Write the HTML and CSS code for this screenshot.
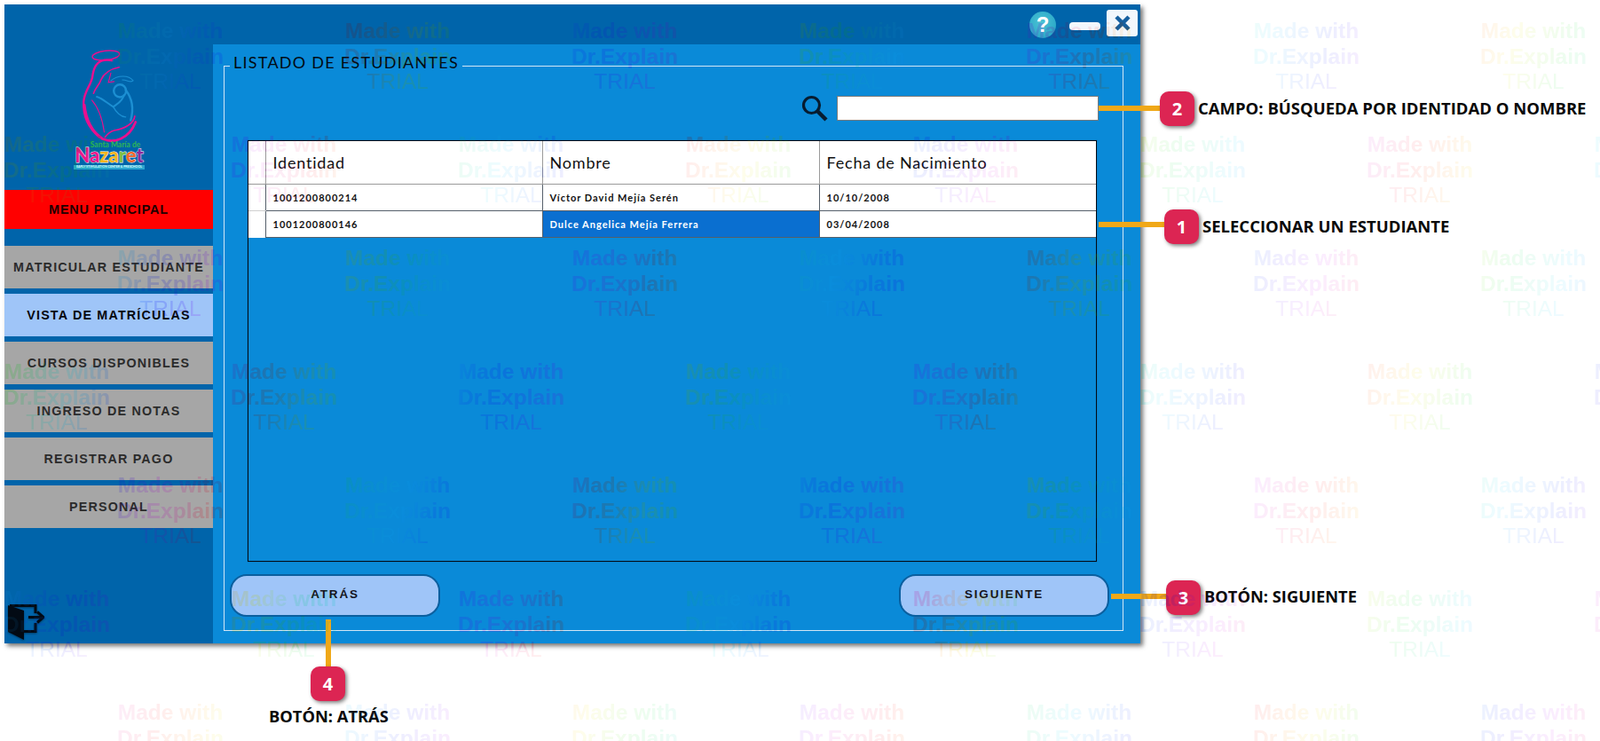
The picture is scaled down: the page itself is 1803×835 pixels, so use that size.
FILE: index.html
```html
<!DOCTYPE html>
<html lang="es">
<head>
<meta charset="utf-8">
<title>Listado de estudiantes</title>
<link rel="stylesheet" href="styles.css">
</head>
<body>
<div class="page">
<div class="window">
  <aside class="sidebar">
    <div class="logo">
      <svg class="logo-art" viewBox="0 0 100 150" width="100" height="150">
        <g transform="translate(9 2) scale(.93 .95)">
        <g fill="none" stroke="#e8108f" stroke-linecap="round">
          <ellipse cx="38" cy="11" rx="16.5" ry="5.5" stroke-width="1.6" transform="rotate(-6 38 11)"/>
          <path d="M45 17C30 14 24 22 22 34C21 46 12 52 11 66C10 84 18 98 30 108" stroke-width="2.6"/>
          <path d="M54 25C44 27 36 31 32 40C30 46 25 50 23 56" stroke-width="1.8"/>
          <path d="M12 70C14 88 22 102 34 110C48 116 66 110 74 90" stroke-width="3"/>
          <path d="M73 83C72 92 60 98 48 100C44 101 40 104 37 108" stroke-width="1.8"/>
          <path d="M21 64C30 74 34 88 36 102" stroke-width="1.2"/>
          <path d="M44 32L41 43L48 42" stroke-width="1.2"/>
        </g>
        <g fill="none" stroke="#1c8fd2" stroke-linecap="round">
          <path d="M44 41C52 34 66 34 71 41C68 44 64 40 58 40" stroke-width="1.2"/>
          <circle cx="55" cy="53" r="7.5" stroke-width="2.6"/>
          <path d="M27 60C34 62 40 68 47 72C52 68 58 66 60 58" stroke-width="2.2"/>
          <path d="M62 52C70 62 72 74 68 88" stroke-width="2.6"/>
          <path d="M47 72C50 78 56 84 62 84" stroke-width="1.4"/>
        </g>
        </g>
        <text class="logo-santa" x="55" y="116" text-anchor="middle">Santa María de</text>
        <text class="logo-naz" x="48" y="133" text-anchor="middle"><tspan fill="#ea1a8c">Na</tspan><tspan fill="#f3b61f">za</tspan><tspan fill="#7cc143">r</tspan><tspan fill="#f2682a">e</tspan><tspan fill="#8e2a9c">t</tspan></text>
      </svg>
      <div class="logo-band">EARLY STIMULATION CENTER &amp; PRESCHOOL</div>
    </div>
    <div class="menu-title">MENU PRINCIPAL</div>
    <nav class="menu">
      <a class="menu-item">MATRICULAR ESTUDIANTE</a>
      <a class="menu-item is-active">VISTA DE MATRÍCULAS</a>
      <a class="menu-item">CURSOS DISPONIBLES</a>
      <a class="menu-item">INGRESO DE NOTAS</a>
      <a class="menu-item">REGISTRAR PAGO</a>
      <a class="menu-item">PERSONAL</a>
    </nav>
    <div class="exit">
      <svg viewBox="0 0 41 42" width="41" height="42">
        <path class="exit-door" d="M0 2L18 8V41L0 32Z"/>
        <path class="exit-frame" d="M2 2.500H31V11M31 22V31.500H18"/>
        <path class="exit-arrow" d="M23 15.500H38M33 9.500L40 15.500L33 21.500"/>
      </svg>
    </div>
  </aside>
  <div class="main">
    <header class="titlebar">
      <span class="tb-help">?</span>
      <span class="tb-min"></span>
      <span class="tb-close">
        <svg viewBox="0 0 20 20" width="20" height="20"><path d="M3 3L17 17M17 3L3 17"/></svg>
      </span>
    </header>
    <div class="content">
      <fieldset class="panel">
        <legend class="panel-title">LISTADO DE ESTUDIANTES</legend>
        <div class="search">
          <svg class="search-icon" viewBox="0 0 30 30" width="30" height="30">
            <circle cx="11.500" cy="11.500" r="9"/><path d="M18 18L28 28"/>
          </svg>
          <input class="search-input" type="text">
        </div>
        <div class="grid-wrap">
          <table class="grid">
            <colgroup><col class="c-sel"><col class="c-col"><col class="c-col"><col></colgroup>
            <thead>
              <tr><th></th><th>Identidad</th><th>Nombre</th><th>Fecha de Nacimiento</th></tr>
            </thead>
            <tbody>
              <tr><td></td><td>1001200800214</td><td>Víctor David Mejía Serén</td><td>10/10/2008</td></tr>
              <tr><td></td><td>1001200800146</td><td class="is-selected">Dulce Angelica Mejía Ferrera</td><td>03/04/2008</td></tr>
            </tbody>
          </table>
        </div>
        <div class="actions">
          <button class="btn">ATRÁS</button>
          <button class="btn">SIGUIENTE</button>
        </div>
      </fieldset>
    </div>
  </div>
</div>

<div class="line line-2"></div>
<div class="badge badge-2">2</div>
<div class="note note-2">CAMPO: BÚSQUEDA POR IDENTIDAD O NOMBRE</div>
<div class="line line-1"></div>
<div class="badge badge-1">1</div>
<div class="note note-1">SELECCIONAR UN ESTUDIANTE</div>
<div class="line line-3"></div>
<div class="badge badge-3">3</div>
<div class="note note-3">BOTÓN: SIGUIENTE</div>
<div class="line line-4"></div>
<div class="badge badge-4">4</div>
<div class="note note-4">BOTÓN: ATRÁS</div>

<div class="wm-blur"></div>
<svg class="wm wm-burn" width="1803" height="835">
  <defs>
    <linearGradient id="wm-rainbow" gradientUnits="userSpaceOnUse" x1="0" y1="0" x2="380" y2="110" spreadMethod="repeat">
      <stop offset="0" stop-color="#ff2020"/>
      <stop offset=".17" stop-color="#f0e000"/>
      <stop offset=".33" stop-color="#20e040"/>
      <stop offset=".5" stop-color="#20d0ff"/>
      <stop offset=".67" stop-color="#2030ff"/>
      <stop offset=".83" stop-color="#d020f0"/>
      <stop offset="1" stop-color="#ff2020"/>
    </linearGradient>
    <pattern id="wm-pattern" patternUnits="userSpaceOnUse" width="256" height="256">
      <g class="wm-text" text-anchor="middle" fill="#fff">
        <text x="192" y="43" class="wm-b">Made with</text>
        <text x="192" y="72" class="wm-b">Dr.Explain</text>
        <text x="192" y="100">TRIAL</text>
        <text x="64" y="171" class="wm-b">Made with</text>
        <text x="64" y="200" class="wm-b">Dr.Explain</text>
        <text x="64" y="228">TRIAL</text>
      </g>
    </pattern>
    <mask id="wm-mask" maskUnits="userSpaceOnUse" x="0" y="0" width="1803" height="835">
      <rect width="1803" height="835" fill="url(#wm-pattern)"/>
    </mask>
  </defs>
  <rect width="1803" height="835" fill="url(#wm-rainbow)" mask="url(#wm-mask)"/>
</svg>
<svg class="wm wm-tint" width="1803" height="835">
  <rect width="1803" height="835" fill="url(#wm-rainbow)" mask="url(#wm-mask)"/>
</svg>
</div>
</body>
</html>
```
FILE: styles.css
```css
* { box-sizing: border-box; }
html, body { margin: 0; height: 835px; }
body {
  width: 1803px;
  overflow: hidden;
  font-family: "Open Sans", "Liberation Sans", sans-serif;
}
.page {
  position: relative;
  isolation: isolate;
  width: 1803px;
  height: 835px;
  padding: 5px;
  background: #fff;
  overflow: hidden;
}

/* window */
.window {
  width: 1280px;
  height: 720px;
  display: flex;
  background: #0064aa;
  box-shadow: 3px 3px 5px rgba(0, 0, 0, .55);
}
.sidebar { width: 235px; display: flex; flex-direction: column; }
.main { flex: 1; display: flex; flex-direction: column; min-width: 0; }

/* logo */
.logo { height: 209px; padding: 45px 0 0 70px; position: relative; }
.logo-art { display: block; overflow: visible; }
.logo-santa { font: 700 8.500px "Lato", sans-serif; fill: #2fb457; }
.logo-naz {
  font: 900 22px "Lato", sans-serif;
  stroke: #fff;
  stroke-width: .8px;
  paint-order: stroke;
}
.logo-band {
  position: absolute;
  left: 78px;
  top: 181px;
  width: 80px;
  height: 5px;
  background: #2ba6cf;
  color: #dff;
  font: 700 3.500px/5px "Lato", sans-serif;
  text-align: center;
  white-space: nowrap;
  overflow: hidden;
}

/* menu */
.menu-title {
  height: 44px;
  background: #f00;
  color: #200;
  display: flex;
  align-items: center;
  justify-content: center;
  font: 700 14.500px "Liberation Sans", sans-serif;
  letter-spacing: .8px;
}
.menu { margin-top: 19px; display: flex; flex-direction: column; gap: 6px; }
.menu-item {
  height: 48px;
  background: #a6a6a6;
  color: #2b2b2b;
  display: flex;
  align-items: center;
  justify-content: center;
  font: 700 14.300px "Liberation Sans", sans-serif;
  letter-spacing: 1.200px;
}
.menu-item.is-active { background: #9fc5f8; color: #05070c; }

.exit { margin-top: auto; padding: 0 0 3px 4px; line-height: 0; filter: drop-shadow(0 1px 1px rgba(0,0,0,.4)); }
.exit-door { fill: #020a14; }
.exit-frame { fill: none; stroke: #020a14; stroke-width: 3px; }
.exit-arrow { fill: none; stroke: #020a14; stroke-width: 3px; }

/* title bar */
.titlebar {
  height: 45px;
  display: flex;
  justify-content: flex-end;
  align-items: flex-start;
  padding-right: 3px;
}
.tb-help {
  width: 30px; height: 30px; margin-top: 8px; margin-right: 15px;
  border-radius: 50%;
  background: radial-gradient(circle at 45% 40%, #4cc3d4, #1f9fc4);
  color: #fff;
  font: 700 24px/30px "Liberation Sans", sans-serif;
  text-align: center;
}
.tb-min {
  width: 35px; height: 9px; margin-top: 20px; margin-right: 7px;
  border-radius: 4px;
  background: #f2f7fc;
}
.tb-close {
  width: 35px; height: 30px; margin-top: 6px;
  border-radius: 3px;
  background: #f2f7fc;
  display: flex; align-items: center; justify-content: center;
}
.tb-close path { stroke: #17609f; stroke-width: 4.500px; fill: none; }

/* panel */
.content { flex: 1; background: #0a8ad8; padding: 12px 19px 14px 12px; display: flex; min-height: 0; }
.panel {
  flex: 1;
  min-width: 0;
  margin: 0;
  padding: 22px 29px 14px 6px;
  border: 1px solid #d3e6f5;
  display: flex;
  flex-direction: column;
}
.panel-title {
  margin-left: 0;
  padding: 0 4px 8px;
  color: #020a12;
  font: 400 18px/16px "Lato", sans-serif;
  letter-spacing: 1.250px;
  white-space: nowrap;
}

.search { display: flex; justify-content: flex-end; align-items: center; gap: 10px; height: 28px; margin-right: -2px; }
.search-icon circle, .search-icon path { fill: none; stroke: #071c30; }
.search-icon circle { stroke-width: 3.200px; }
.search-icon path { stroke-width: 4.500px; }
.search-input {
  width: 295px;
  height: 28px;
  margin: 0;
  padding: 0;
  background: #fff;
  border: 1px solid #7a7a7a;
  border-radius: 0;
}

/* table */
.grid-wrap {
  margin: 22px 0 0 20px;
  height: 475px;
  border: 1px solid #020a14;
  box-shadow: 0 0 1px rgba(0,0,0,.4);
}
.grid {
  width: 100%;
  table-layout: fixed;
  border-collapse: collapse;
  background: #fff;
  color: #111;
}
.c-sel { width: 19px; }
.c-col { width: 312px; }
.grid th {
  height: 48px;
  padding: 0 0 0 8px;
  text-align: left;
  font: 400 18px "Lato", sans-serif;
  letter-spacing: .8px;
  border-left: 1px solid #9a9a9a;
  border-bottom: 1px solid #9a9a9a;
}
.grid th:first-child, .grid td:first-child { border-left: 0; padding: 0; }
.grid td {
  height: 30px;
  padding: 0 0 0 8px;
  font: 700 11px "Lato", sans-serif;
  letter-spacing: 1px;
  border-left: 1px solid #555f6a;
  border-bottom: 1px solid #555f6a;
}
.grid td:first-child { border-bottom-color: #d0d0d0; }
.grid tr:last-child td:first-child { border-bottom: 0; }
.grid td.is-selected { background: #0a6fd0; color: #fff; }

/* buttons */
.actions { margin-top: 14px; display: flex; justify-content: space-between; margin-right: -14px; }
.btn {
  width: 237px;
  height: 48px;
  border: 2px solid #0a5f9f;
  border-radius: 19px;
  background: #9fc5f8;
  color: #14141c;
  font: 700 13.500px "Liberation Sans", sans-serif;
  letter-spacing: 1.800px;
  padding: 0 0 4px;
}

/* callouts */
.line { position: absolute; background: #f0a818; }
.line-2 { left: 1238px; top: 119px; width: 70px; height: 6px; }
.line-1 { left: 1238px; top: 250px; width: 75px; height: 6px; }
.line-3 { left: 1252px; top: 669px; width: 63px; height: 6px; }
.line-4 { left: 367px; top: 698px; width: 6px; height: 54px; }

.badge {
  position: absolute;
  width: 39px;
  height: 39px;
  border-radius: 10px;
  background: #dc2553;
  color: #fff;
  font: 700 20px/39px "Open Sans", sans-serif;
  text-align: center;
  box-shadow: 2px 2px 4px rgba(0,0,0,.5);
}
.badge-2 { left: 1307px; top: 103px; }
.badge-1 { left: 1312px; top: 236px; }
.badge-3 { left: 1314px; top: 654px; }
.badge-4 { left: 350px; top: 751px; }

.note {
  position: absolute;
  color: #0a0a0a;
  font: 700 18.300px/24px "Open Sans", sans-serif;
  white-space: nowrap;
}
.note-2 { left: 1350px; top: 110px; font-size: 18.500px; }
.note-1 { left: 1355px; top: 243px; font-size: 18.500px; }
.note-3 { left: 1357px; top: 660px; }
.note-4 { left: 303px; top: 795px; }

/* watermark */
.wm-blur {
  position: absolute;
  inset: 0;
  backdrop-filter: blur(.7px);
  -webkit-mask: repeating-conic-gradient(#000 0 25%, transparent 0 50%) 0 0 / 256px 256px;
  mask: repeating-conic-gradient(#000 0 25%, transparent 0 50%) 0 0 / 256px 256px;
  pointer-events: none;
}
.wm { position: absolute; left: 0; top: 0; pointer-events: none; }
.wm-tint { opacity: .08; }
.wm-burn { mix-blend-mode: color-burn; opacity: .11; }
.wm-text { font: 400 24.500px "Liberation Sans", sans-serif; }
.wm-b { font-weight: 700; }
```
